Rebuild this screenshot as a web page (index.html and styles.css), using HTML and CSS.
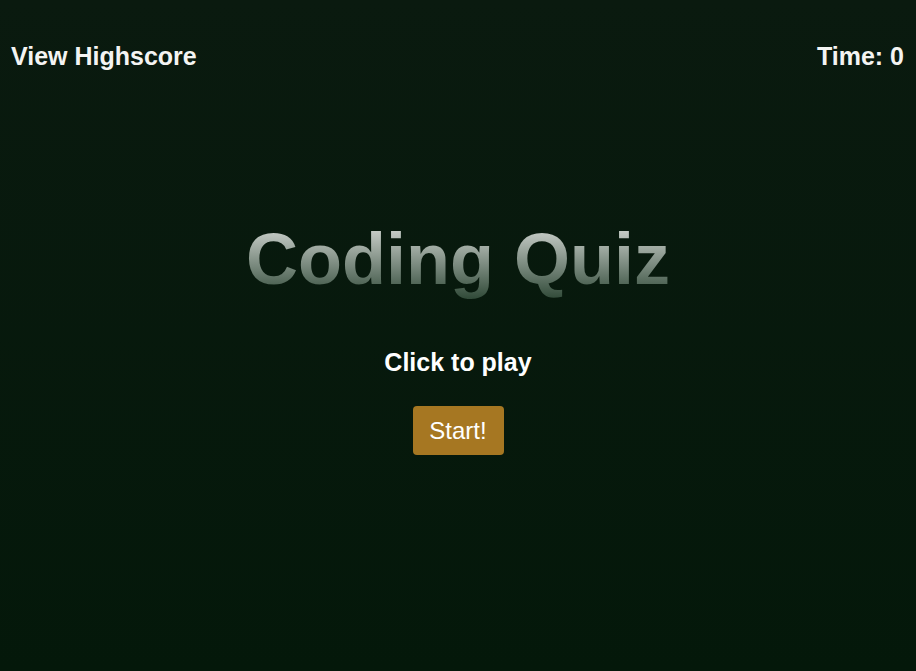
FILE: index.html
```html
<!DOCTYPE html>
<html lang="en">
<head>
<meta charset="utf-8">
<title>Coding Quiz</title>
<link rel="stylesheet" href="styles.css">
</head>
<body>
<header class="top-bar">
  <a class="highscore-link" href="#">View Highscore</a>
  <div class="timer">Time: <span class="time-value">0</span></div>
</header>
<main class="intro">
  <h1 class="title">Coding Quiz</h1>
  <p class="subtitle">Click to play</p>
  <button class="start-btn" type="button">Start!</button>
</main>
</body>
</html>
```
FILE: styles.css
```css
html, body {
  margin: 0;
  padding: 0;
  height: 100%;
}
body {
  background: linear-gradient(to bottom, #0a1a0f 0%, #04180a 100%);
  font-family: "Liberation Sans", Arial, Helvetica, sans-serif;
  color: #ffffff;
}
.top-bar {
  display: flex;
  justify-content: space-between;
  align-items: center;
  padding: 42px 12px 0 11px;
}
.highscore-link,
.timer {
  font-size: 25px;
  font-weight: 700;
  line-height: 29px;
  color: #f4f4f2;
  text-decoration: none;
}
.intro {
  display: flex;
  flex-direction: column;
  align-items: center;
  padding-top: 147px;
}
.title {
  margin: 0;
  font-size: 72px;
  font-weight: 700;
  line-height: 83px;
  background: linear-gradient(to bottom, #d2d6d2 8%, #2c4634 100%);
  -webkit-background-clip: text;
  background-clip: text;
  color: transparent;
}
.subtitle {
  margin: 47px 0 0 0;
  font-size: 25px;
  font-weight: 700;
  line-height: 29px;
}
.start-btn {
  margin-top: 29px;
  width: 91px;
  height: 49px;
  padding: 0;
  border: none;
  border-radius: 4px;
  background: #a67722;
  color: #ffffff;
  font-family: "Liberation Sans", Arial, Helvetica, sans-serif;
  font-size: 24px;
  cursor: pointer;
}
```
